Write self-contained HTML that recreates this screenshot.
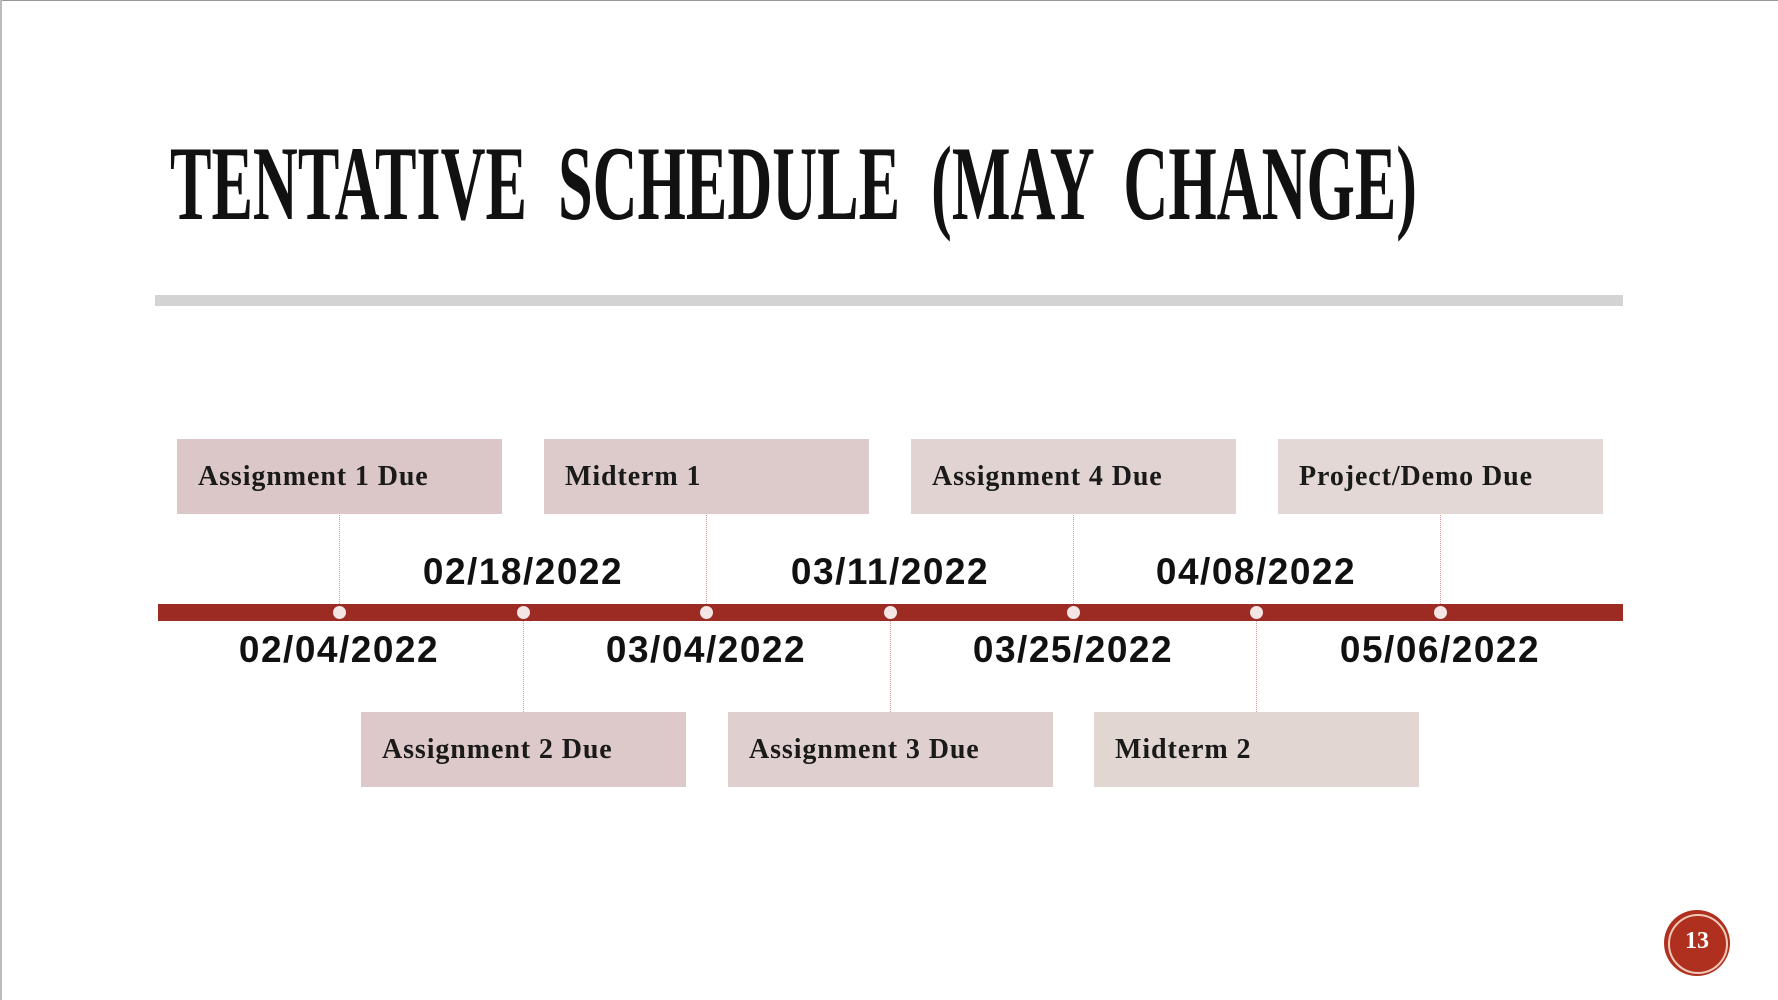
<!DOCTYPE html>
<html><head><meta charset="utf-8"><style>
body{margin:0;width:1778px;height:1000px;background:#fff;position:relative;overflow:hidden;font-family:"Liberation Serif",serif}
.a{position:absolute}
.box{position:absolute;width:325px;height:75px;font-weight:bold;font-size:28px;letter-spacing:0.9px;color:#1a1a1a;line-height:75px;padding-left:21px;box-sizing:border-box;white-space:nowrap}
.d{position:absolute;width:300px;text-align:center;font-family:"Liberation Sans",sans-serif;font-weight:bold;font-size:37px;letter-spacing:1.5px;color:#111}
.v{position:absolute;width:0;border-left:1px dotted #d29a9a}
.dot{position:absolute;width:13px;height:13px;border-radius:50%;background:#f3e6e4;top:606px}
</style></head><body>
<div class="a" style="left:0;top:0;width:1778px;height:1px;background:#999"></div>
<div class="a" style="left:0;top:0;width:2px;height:1000px;background:#bbb"></div>
<svg class="a" style="left:0;top:0" width="1778" height="260"><text x="170" y="219" textLength="1247" lengthAdjust="spacingAndGlyphs" font-family="Liberation Serif" font-weight="bold" font-size="106" fill="#111" style="white-space:pre">TENTATIVE  SCHEDULE  (MAY  CHANGE)</text></svg>
<div class="a" style="left:155px;top:295px;width:1468px;height:11px;background:#d3d3d3"></div>

<div class="v" style="left:339px;top:513px;height:95px"></div>
<div class="v" style="left:706px;top:513px;height:95px"></div>
<div class="v" style="left:1073px;top:513px;height:95px"></div>
<div class="v" style="left:1440px;top:513px;height:95px"></div>
<div class="v" style="left:523px;top:615px;height:97px"></div>
<div class="v" style="left:890px;top:615px;height:97px"></div>
<div class="v" style="left:1256px;top:615px;height:97px"></div>

<div class="box" style="left:177px;top:439px;background:#dcc7c8">Assignment 1 Due</div>
<div class="box" style="left:544px;top:439px;background:#ddcbcb">Midterm 1</div>
<div class="box" style="left:911px;top:439px;background:#e0d3d1">Assignment 4 Due</div>
<div class="box" style="left:1278px;top:439px;background:#e3d8d5">Project/Demo Due</div>
<div class="box" style="left:361px;top:712px;background:#ddc9c9">Assignment 2 Due</div>
<div class="box" style="left:728px;top:712px;background:#dfcfce">Assignment 3 Due</div>
<div class="box" style="left:1094px;top:712px;background:#e2d6d3">Midterm 2</div>

<div class="a" style="left:158px;top:604px;width:1465px;height:17px;background:#9c2b24"></div>
<div class="dot" style="left:333px"></div><div class="dot" style="left:517px"></div><div class="dot" style="left:700px"></div><div class="dot" style="left:884px"></div><div class="dot" style="left:1067px"></div><div class="dot" style="left:1250px"></div><div class="dot" style="left:1434px"></div>

<div class="d" style="left:373px;top:551px">02/18/2022</div>
<div class="d" style="left:740px;top:551px">03/11/2022</div>
<div class="d" style="left:1106px;top:551px">04/08/2022</div>
<div class="d" style="left:189px;top:629px">02/04/2022</div>
<div class="d" style="left:556px;top:629px">03/04/2022</div>
<div class="d" style="left:923px;top:629px">03/25/2022</div>
<div class="d" style="left:1290px;top:629px">05/06/2022</div>

<div class="a" style="left:1664px;top:910px;width:66px;height:66px;border-radius:50%;background:#b0301f"></div>
<div class="a" style="left:1668px;top:914px;width:56px;height:56px;border-radius:50%;border:2px solid #f0c8b8"></div>
<div class="a" style="left:1664px;top:928px;width:66px;text-align:center;color:#fff;font-weight:bold;font-size:24px">13</div>
</body></html>
